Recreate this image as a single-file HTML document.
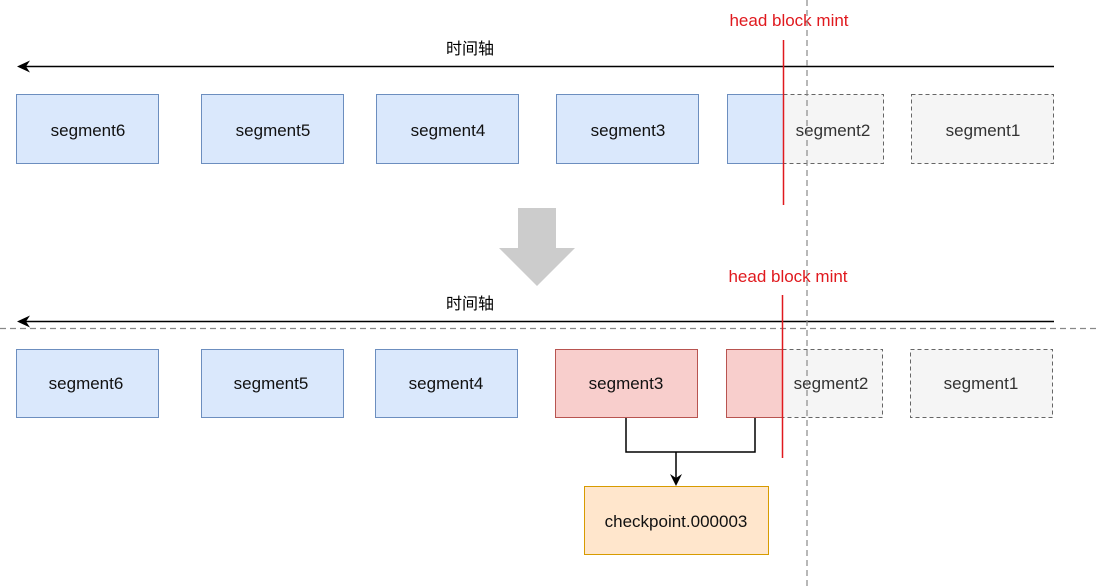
<!DOCTYPE html>
<html><head><meta charset="utf-8"><style>
html,body{margin:0;padding:0;background:#fff;}
svg{display:block;}
text{font-family:"Liberation Sans","Noto Sans CJK SC",sans-serif;font-size:17px;}
</style></head><body>
<svg width="1100" height="588" viewBox="0 0 1100 588" xmlns="http://www.w3.org/2000/svg">
<!-- top -->
<text x="470" y="54" text-anchor="middle" fill="#000" style="font-size:16px">时间轴</text>
<line x1="24" y1="66.5" x2="1054" y2="66.5" stroke="#000" stroke-width="1.5"/>
<path d="M17 66.5 L30 60.5 L26 66.5 L30 72.5 Z" fill="#000"/>
<text x="789" y="26" text-anchor="middle" fill="#e0191e">head block mint</text>

<g stroke="#6c8ebf" fill="#dae8fc" stroke-width="1">
<rect x="16.5" y="94.5" width="142" height="69"/>
<rect x="201.5" y="94.5" width="142" height="69"/>
<rect x="376.5" y="94.5" width="142" height="69"/>
<rect x="556.5" y="94.5" width="142" height="69"/>
</g>
<rect x="783.5" y="94.5" width="100" height="69" fill="#f5f5f5" stroke="#666" stroke-dasharray="4 3"/>
<rect x="911.5" y="94.5" width="142" height="69" fill="#f5f5f5" stroke="#666" stroke-dasharray="4 3"/>
<path d="M783 94.5 H727.5 V163.5 H783" fill="#dae8fc" stroke="#6c8ebf"/>
<g fill="#111" text-anchor="middle">
<text x="88" y="136">segment6</text>
<text x="273" y="136">segment5</text>
<text x="448" y="136">segment4</text>
<text x="628" y="136">segment3</text>
<text x="833" y="136" fill="#333">segment2</text>
<text x="983" y="136" fill="#333">segment1</text>
</g>
<line x1="783.5" y1="40" x2="783.5" y2="205" stroke="#e0191e" stroke-width="1.5"/>

<!-- big arrow -->
<path d="M518 208 H556 V248 H575 L537 286 L499 248 H518 Z" fill="#ccc"/>

<!-- bottom -->
<text x="470" y="309" text-anchor="middle" fill="#000" style="font-size:16px">时间轴</text>
<line x1="0" y1="328.5" x2="1100" y2="328.5" stroke="#888" stroke-width="1.2" stroke-dasharray="6 4"/>
<line x1="24" y1="321.5" x2="1054" y2="321.5" stroke="#000" stroke-width="1.5"/>
<path d="M17 321.5 L30 315.5 L26 321.5 L30 327.5 Z" fill="#000"/>
<text x="788" y="282" text-anchor="middle" fill="#e0191e">head block mint</text>

<g stroke="#6c8ebf" fill="#dae8fc" stroke-width="1">
<rect x="16.5" y="349.5" width="142" height="68"/>
<rect x="201.5" y="349.5" width="142" height="68"/>
<rect x="375.5" y="349.5" width="142" height="68"/>
</g>
<rect x="555.5" y="349.5" width="142" height="68" fill="#f8cecc" stroke="#b85450"/>
<rect x="782.5" y="349.5" width="100" height="68" fill="#f5f5f5" stroke="#666" stroke-dasharray="4 3"/>
<rect x="910.5" y="349.5" width="142" height="68" fill="#f5f5f5" stroke="#666" stroke-dasharray="4 3"/>
<path d="M782 349.5 H726.5 V417.5 H782" fill="#f8cecc" stroke="#b85450"/>
<g fill="#111" text-anchor="middle">
<text x="86" y="389">segment6</text>
<text x="271" y="389">segment5</text>
<text x="446" y="389">segment4</text>
<text x="626" y="389">segment3</text>
<text x="831" y="389" fill="#333">segment2</text>
<text x="981" y="389" fill="#333">segment1</text>
</g>
<path d="M626 418 V452 H755 V418" fill="none" stroke="#000" stroke-width="1.5"/>
<line x1="676" y1="452" x2="676" y2="480" stroke="#000" stroke-width="1.5"/>
<path d="M676 486 L670 474 L676 478 L682 474 Z" fill="#000"/>
<rect x="584.5" y="486.5" width="184" height="68" fill="#ffe6cc" stroke="#d79b00"/>
<text x="676" y="527" text-anchor="middle" fill="#111">checkpoint.000003</text>
<line x1="782.5" y1="295" x2="782.5" y2="458" stroke="#e0191e" stroke-width="1.5"/>

<line x1="807" y1="0" x2="807" y2="588" stroke="#888" stroke-width="1.2" stroke-dasharray="6 4"/>
</svg>
</body></html>
